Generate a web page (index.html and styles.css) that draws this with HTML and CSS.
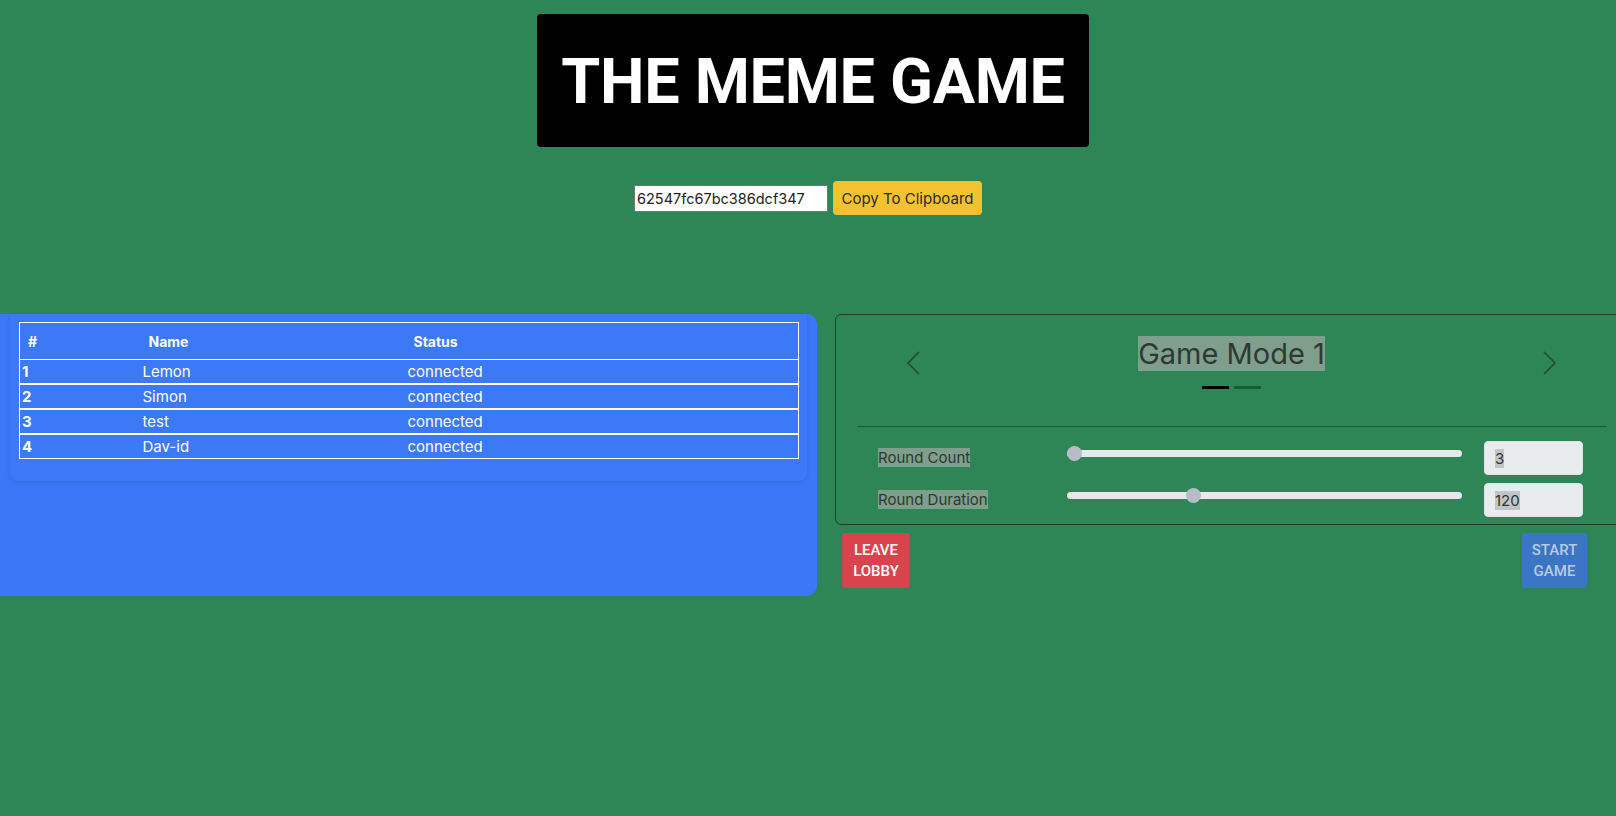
FILE: index.html
```html
<!DOCTYPE html>
<html lang="en">
<head>
<meta charset="utf-8">
<title>The Meme Game - Lobby</title>
<link rel="stylesheet" href="styles.css">
</head>
<body>
<header class="header">
  <div class="title-box"><h1 class="title">THE MEME GAME</h1></div>
</header>

<div class="invite">
  <input class="invite-code" type="text" value="62547fc67bc386dcf347" readonly>
  <button class="copy-btn">Copy To Clipboard</button>
</div>

<main class="lobby">
  <section class="players-panel">
    <div class="players-card">
      <table class="players">
        <thead>
          <tr><th class="c-num">#</th><th class="c-name">Name</th><th class="c-status">Status</th></tr>
        </thead>
        <tbody>
          <tr><td class="num">1</td><td>Lemon</td><td>connected</td></tr>
          <tr><td class="num">2</td><td>Simon</td><td>connected</td></tr>
          <tr><td class="num">3</td><td>test</td><td>connected</td></tr>
          <tr><td class="num">4</td><td>Dav-id</td><td>connected</td></tr>
        </tbody>
      </table>
    </div>
  </section>

  <section class="settings-col">
    <div class="settings-panel">
      <div class="carousel">
        <button class="arrow" aria-label="Previous">
          <svg width="14" height="24" viewBox="0 0 14 24"><polyline points="13,1 2,12 13,23" fill="none" stroke="#1e4d33" stroke-width="1.6"/></svg>
        </button>
        <div class="slide">
          <span class="caption"><span class="sel">Game Mode 1</span></span>
          <div class="indicators"><span class="ind active"></span><span class="ind"></span></div>
        </div>
        <button class="arrow" aria-label="Next">
          <svg width="14" height="24" viewBox="0 0 14 24"><polyline points="1,1 12,12 1,23" fill="none" stroke="#1e4d33" stroke-width="1.6"/></svg>
        </button>
      </div>
      <hr class="divider">
      <div class="options">
        <div class="opt-row">
          <label class="opt-label"><span class="sel">Round Count</span></label>
          <input class="range" type="range" min="3" max="20" value="3">
          <div class="num-field"><span class="sel-light">3</span></div>
        </div>
        <div class="opt-row">
          <label class="opt-label"><span class="sel">Round Duration</span></label>
          <input class="range" type="range" min="20" max="340" value="120">
          <div class="num-field"><span class="sel-light">120</span></div>
        </div>
      </div>
    </div>
    <div class="actions">
      <button class="btn btn-leave">LEAVE<br>LOBBY</button>
      <button class="btn btn-start">START<br>GAME</button>
    </div>
  </section>
</main>
</body>
</html>
```

FILE: styles.css
```css
* { box-sizing: border-box; }

html, body {
  margin: 0;
  padding: 0;
}

body {
  width: 1616px;
  height: 816px;
  overflow: hidden;
  background: #2e8555;
  font-family: "Inter", "Noto Sans", sans-serif;
  color: #fff;
}

.header {
  display: flex;
  justify-content: center;
  padding: 14px 0 0 10px;
}

.title-box {
  width: 552px;
  height: 133px;
  background: #000;
  border-radius: 4px;
  display: flex;
  align-items: center;
  justify-content: center;
}

.title {
  margin: 0;
  font-family: "Roboto", "Liberation Sans", sans-serif;
  font-weight: 700;
  font-size: 63px;
  letter-spacing: -0.3px;
  color: #fff;
  line-height: 1;
  padding-top: 2px;
}

.invite {
  display: flex;
  justify-content: center;
  align-items: center;
  gap: 5px;
  margin-top: 34px;
}

.invite-code {
  width: 194px;
  height: 27px;
  border: 1px solid #767676;
  background: #fff;
  color: #222;
  font-family: "Inter", sans-serif;
  font-size: 14.5px;
  padding: 0 2px;
  outline: none;
}

.copy-btn {
  width: 149px;
  height: 34px;
  background: #f5c22f;
  border: none;
  border-radius: 4px;
  color: #2a2a2a;
  font-family: "Inter", sans-serif;
  font-size: 15px;
  padding: 0;
}

.lobby {
  display: flex;
  align-items: flex-start;
  gap: 18px;
  margin-top: 99px;
}

.players-panel {
  width: 817px;
  height: 282px;
  flex: none;
  background: #3b78f8;
  border-radius: 0 10px 10px 0;
  padding: 0 10px;
}

.players-card {
  width: 797px;
  padding: 8px 8px 22px 9px;
  background: #3b79f7;
  border-radius: 0 0 8px 8px;
  box-shadow: 0 2px 5px rgba(0, 30, 90, 0.12);
}

.players {
  width: 780px;
  border-collapse: collapse;
  border: 1px solid #fff;
  table-layout: fixed;
}

.players th {
  height: 37px;
  text-align: left;
  font-weight: 700;
  font-size: 14px;
  padding: 0 0 0 8px;
  border-bottom: 1px solid #fff;
}

.players .c-num { width: 121px; }
.players .c-name { width: 265px; }

.players td {
  height: 23px;
  font-size: 15px;
  padding: 0 0 0 2px;
  line-height: 23px;
}

.players tbody tr:last-child td {
  height: 24px;
}

.players td.num { font-weight: 700; }

.players tbody tr:not(:last-child) td {
  border-bottom: 2px solid #fff;
}

.settings-col {
  width: 794px;
  flex: none;
}

.settings-panel {
  height: 211px;
  border: 1px solid #1a3d29;
  border-radius: 6px 0 0 6px;
}

.carousel {
  height: 96px;
  display: flex;
  align-items: center;
  padding: 0 71px 0 70px;
}

.arrow {
  width: 14px;
  height: 24px;
  padding: 0;
  border: none;
  background: none;
  display: flex;
}

.slide {
  flex: 1;
  align-self: flex-start;
  padding-top: 21px;
  display: flex;
  flex-direction: column;
  align-items: center;
}

.caption {
  font-size: 29px;
  line-height: 36px;
  color: #2d3a33;
}

.sel {
  background: #7f9e8b;
}

.sel-light {
  background: #c2c5c8;
}

.indicators {
  display: flex;
  gap: 5px;
  margin-top: 14px;
}

.ind {
  width: 27px;
  height: 3px;
  background: #1b5a39;
}

.ind.active {
  background: #000;
}

.divider {
  margin: 15px 21px 0 21px;
  border: none;
  border-top: 1px solid #1d5b3b;
  height: 0;
}

.options {
  display: flex;
  flex-direction: column;
  gap: 8px;
  margin-top: 14px;
  padding-left: 42px;
}

.opt-row {
  display: grid;
  grid-template-columns: 189px 395px 22px 99px;
  align-items: center;
  height: 34px;
}

.opt-row .num-field { grid-column: 4; }

.opt-label {
  font-size: 15px;
  line-height: 22px;
  color: #2b3a32;
}

.range {
  -webkit-appearance: none;
  appearance: none;
  width: 395px;
  height: 15px;
  margin: 0 0 9px 0;
  background: transparent;
}

.range::-webkit-slider-runnable-track {
  height: 7px;
  background: #e6e9ec;
  border-radius: 4px;
}

.range::-webkit-slider-thumb {
  -webkit-appearance: none;
  width: 15px;
  height: 15px;
  border-radius: 50%;
  background: #b8bcc6;
  margin-top: -4px;
  border: none;
}

.num-field {
  width: 99px;
  height: 34px;
  background: #e9ecef;
  border: 1px solid #dfe2e5;
  border-radius: 4px;
  padding-left: 10px;
  display: flex;
  align-items: center;
  font-size: 15px;
  color: #333;
}

.actions {
  display: flex;
  justify-content: space-between;
  margin-top: 8px;
  padding: 0 42px 0 7px;
}

.btn {
  border: none;
  border-radius: 3px;
  font-family: "Roboto", "Liberation Sans", sans-serif;
  font-weight: 500;
  font-size: 15px;
  line-height: 21px;
  padding: 0;
  height: 55px;
}

.btn-leave {
  width: 68px;
  background: #d9434e;
  color: #fff;
}

.btn-start {
  width: 65px;
  background: #3a76c3;
  color: #b7cbe3;
}
```
